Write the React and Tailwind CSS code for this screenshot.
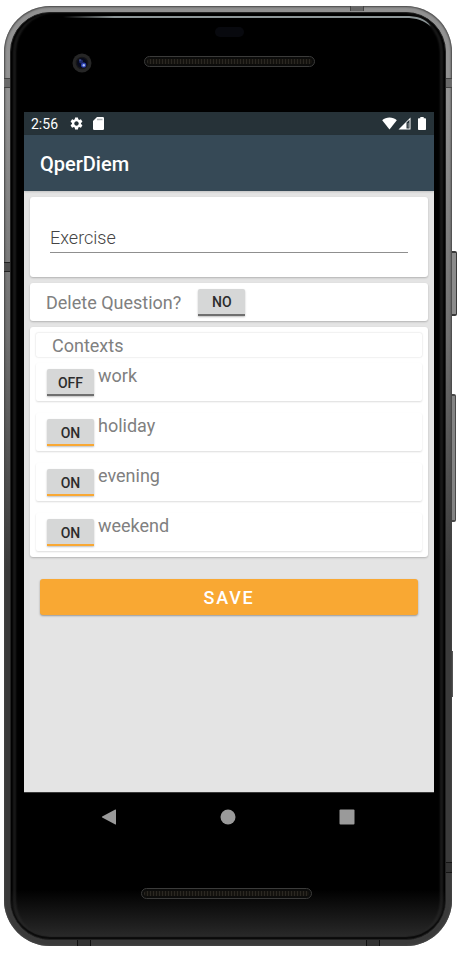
import { useState } from "react";
import { MdSettings } from "react-icons/md";

function SpeakerGrill() {
  return (
    <div className="h-[11px] w-[171px] rounded-full border border-[#3b3b3a] bg-[#0c0c0b] p-[2px]">
      <div className="h-full rounded-full bg-[repeating-linear-gradient(90deg,#2b2822_0px,#2b2822_1px,#15130f_1px,#15130f_3px)]" />
    </div>
  );
}

function Camera() {
  return (
    <svg width="20" height="20" viewBox="0 0 20 20" aria-hidden="true">
      <circle cx="10" cy="10" r="9.5" fill="#262626" />
      <circle cx="10" cy="10" r="6.3" fill="#161618" />
      <circle cx="10" cy="10" r="5" fill="#070a1c" />
      <circle cx="9" cy="8.5" r="2" fill="#1d2a6b" />
      <circle cx="11.6" cy="12" r="2.6" fill="#2b3fae" />
      <circle cx="11.8" cy="12.2" r="1.2" fill="#a9bdf5" />
      <circle cx="8" cy="7" r="0.7" fill="#6d7fc4" />
    </svg>
  );
}

function TopGlare() {
  return (
    <div className="absolute inset-x-0 top-[2px] flex items-start pr-3 pl-[52px]">
      <div className="mt-px h-[2px] flex-1 bg-linear-to-r from-transparent via-[#8d9698] via-15% to-[#8d9698]" />
      <svg width="28" height="14" viewBox="0 0 28 14" aria-hidden="true">
        <path d="M0 1 C12 1 20 3 26 11.5 C19 5.500 12 3 0 3 Z" fill="#8d9698" />
      </svg>
    </div>
  );
}

function StatusBar() {
  return (
    <div className="flex h-[23px] items-center bg-[#263238] pr-2 pl-[7px] text-white">
      <span className="text-sm leading-none">2:56</span>
      <MdSettings className="ml-[11px] size-[15px]" />
      <svg className="ml-[9px]" width="11" height="13" viewBox="0 0 11 13" aria-hidden="true">
        <path d="M4 0 H9.800 Q11 0 11 1.200 V11.800 Q11 13 9.800 13 H1.200 Q0 13 0 11.800 V4 Z" fill="#fff" />
        <path d="M4 2.500 H9.500" stroke="#8a9194" strokeWidth="1.500" strokeOpacity="0.7" />
      </svg>
      <div className="ml-auto flex items-center">
        <svg width="15" height="13" viewBox="0 0 15 13" aria-hidden="true">
          <path d="M7.500 12.600 L0.200 3.200 C4 -0.400 11 -0.400 14.800 3.200 Z" fill="#fff" />
        </svg>
        <svg className="ml-px" width="13" height="13" viewBox="0 0 13 13" aria-hidden="true">
          <path d="M0.500 12.500 L12.500 0.500 V12.500 Z" fill="#fff" />
          <path d="M8.500 5.500 L11.500 2.800 V11.500 H8.500 Z" fill="#263238" />
          <path d="M9.700 6 H10.700 V10.800 H9.700 Z" fill="#fff" fillOpacity="0.4" />
        </svg>
        <svg className="ml-[7px]" width="8" height="13" viewBox="0 0 8 13" aria-hidden="true">
          <path d="M2.300 0 H5.700 V1.300 H7.200 Q8 1.300 8 2.100 V12.200 Q8 13 7.200 13 H0.800 Q0 13 0 12.200 V2.100 Q0 1.300 0.800 1.300 H2.300 Z" fill="#fff" />
        </svg>
      </div>
    </div>
  );
}

function Card({ className = "", children }) {
  return (
    <section className={"rounded-[3px] bg-white shadow-[0_1px_2px_rgba(0,0,0,0.22)] " + className}>
      {children}
    </section>
  );
}

function ToggleButton({ id, labelledBy, on, onText, offText, onToggle }) {
  return (
    <button
      id={id}
      type="button"
      aria-pressed={on}
      aria-labelledby={labelledBy + " " + id}
      onClick={onToggle}
      className={
        "h-[27px] w-[47px] shrink-0 rounded-t-[2px] border-b-2 bg-[#d6d7d7] pt-[2px] text-sm leading-none font-medium text-[#2c2c2c] shadow-[0_1px_2px_rgba(0,0,0,0.25)] " +
        (on ? "border-[#f9a833]" : "border-[#6f6f6f]")
      }
    >
      {on ? onText : offText}
    </button>
  );
}

function SideButtons() {
  return (
    <>
      <div className="absolute top-[245px] left-full h-[65px] w-[5px] rounded-r-[2px] border-y-2 border-r border-[#3a3a3a] bg-[#8c8c8c]" />
      <div className="absolute top-[388px] left-full h-[128px] w-1 rounded-r-[2px] border-y-2 border-r border-[#4a4a4a] bg-[#858585]" />
      <div className="absolute top-[645px] left-full h-[46px] w-px bg-[#555]" />
      <div className="absolute top-[72px] left-0 h-[10px] w-[7px] border-y border-[#444] bg-[#6a6a6a]" />
      <div className="absolute top-[72px] right-0 h-[10px] w-[7px] border-y border-[#444] bg-[#6a6a6a]" />
      <div className="absolute top-[256px] left-0 h-[10px] w-[7px] border-y border-[#222] bg-[#4c4c4c]" />
      <div className="absolute right-0 bottom-[73px] h-[11px] w-[6px] border-y border-[#151515] bg-[#333]" />
      <div className="absolute top-0 right-[88px] h-[5px] w-[14px] border-x border-[#444] bg-[#666]" />
      <div className="absolute bottom-0 left-[73px] h-[6px] w-[14px] border-x border-[#111] bg-[#333]" />
      <div className="absolute right-[72px] bottom-0 h-[6px] w-[14px] border-x border-[#111] bg-[#333]" />
    </>
  );
}

export default function App() {
  const [question, setQuestion] = useState("Exercise");
  const [remove, setRemove] = useState(false);
  const [contexts, setContexts] = useState([
    { name: "work", on: false },
    { name: "holiday", on: true },
    { name: "evening", on: true },
    { name: "weekend", on: true },
  ]);
  const toggle = (name) =>
    setContexts(contexts.map((c) => (c.name === name ? { ...c, on: !c.on } : c)));

  return (
    <div className="flex min-h-screen bg-white pt-[6px] pr-[7px] pb-[7px] pl-1 font-[Roboto,sans-serif]">
      <div className="relative flex flex-1 flex-col rounded-[46px] bg-linear-to-b from-[#929292] from-10% via-[#707070] via-35% to-[#3a3a3a] to-60% p-[6px] shadow-[inset_0_0_2px_1px_#444]">
        <SideButtons />
        <div className="relative flex flex-1 flex-col rounded-[40px] border border-[#222] bg-black pr-[11px] pl-[13px] shadow-[inset_2px_0_2px_#000,inset_-2px_0_2px_#000,inset_5px_0_2px_#1b1b1b,inset_-5px_0_2px_#1b1b1b]">
          <TopGlare />
          <header className="grid h-[99px] grid-cols-[1fr_171px_1fr] items-start">
            <div className="pt-10 pl-12">
              <Camera />
            </div>
            <div className="flex flex-col items-center pt-[14px]">
              <div className="h-[10px] w-[29px] rounded-full bg-[#08090e]" />
              <div className="mt-[19px]">
                <SpeakerGrill />
              </div>
            </div>
          </header>

          <div className="flex flex-1 flex-col bg-[#e4e4e4]">
            <StatusBar />
            <div className="flex h-14 items-center bg-[#364956] px-4 pt-[2px] shadow-[0_1px_2px_rgba(0,0,0,0.15)]">
              <h1 className="text-xl leading-6 font-medium text-white">QperDiem</h1>
            </div>
            <main className="flex flex-1 flex-col gap-[6px] p-[6px]">
              <Card className="px-5 py-6">
                <input
                  type="text"
                  aria-label="Question"
                  value={question}
                  onChange={(e) => setQuestion(e.target.value)}
                  className="block h-8 w-full border-b border-[#8f8f8f] bg-transparent pt-px text-lg leading-6 font-light text-[#444] outline-none"
                />
              </Card>
              <Card className="flex h-[38px] items-center px-4">
                <span id="delete-label" className="pt-[2px] text-lg leading-6 text-[#808080]">
                  Delete Question?
                </span>
                <div className="ml-[17px] flex">
                  <ToggleButton
                    id="delete-toggle"
                    labelledBy="delete-label"
                    on={remove}
                    onText="YES"
                    offText="NO"
                    onToggle={() => setRemove(!remove)}
                  />
                </div>
              </Card>
              <Card className="flex flex-col gap-[6px] p-[6px]">
                <h2 className="h-6 rounded-[2px] px-4 text-lg leading-[26px] text-[#808080] shadow-[0_0_2px_rgba(0,0,0,0.2)]">
                  Contexts
                </h2>
                <ul className="flex flex-col gap-3">
                  {contexts.map((c) => (
                    <li
                      key={c.name}
                      className="flex h-[38px] items-start gap-1 rounded-[2px] px-[11px] shadow-[0_1px_2px_rgba(0,0,0,0.14)]"
                    >
                      <div className="flex pt-[6px]">
                        <ToggleButton
                          id={"toggle-" + c.name}
                          labelledBy={"label-" + c.name}
                          on={c.on}
                          onText="ON"
                          offText="OFF"
                          onToggle={() => toggle(c.name)}
                        />
                      </div>
                      <span id={"label-" + c.name} className="text-lg leading-[26px] text-[#808080]">
                        {c.name}
                      </span>
                    </li>
                  ))}
                </ul>
              </Card>
              <button
                type="button"
                className="mx-[10px] mt-4 h-9 rounded-[3px] bg-[#f9a833] pt-[2px] text-lg leading-6 font-medium tracking-widest text-white shadow-[0_1px_2px_rgba(0,0,0,0.35)]"
              >
                SAVE
              </button>
            </main>
          </div>

          <nav className="flex h-12 items-center justify-between border-t border-[#3a3a3a] pr-[79px] pl-[77px] text-[#9a9a9a]">
            <button type="button" aria-label="Back">
              <svg width="16" height="16" viewBox="0 0 16 16" aria-hidden="true">
                <path d="M14.300 0.500 Q15 0.200 15 1 V15 Q15 15.800 14.300 15.500 L1.200 8.600 Q0.400 8 1.200 7.400 Z" fill="currentColor" />
              </svg>
            </button>
            <button type="button" aria-label="Home">
              <svg width="16" height="16" viewBox="0 0 16 16" aria-hidden="true">
                <circle cx="8" cy="8" r="7.500" fill="currentColor" />
              </svg>
            </button>
            <button type="button" aria-label="Recent apps">
              <svg width="16" height="16" viewBox="0 0 16 16" aria-hidden="true">
                <rect x="0.500" y="0.500" width="15" height="15" rx="1" fill="currentColor" />
              </svg>
            </button>
          </nav>
          <footer className="-mr-[11px] -ml-[13px] flex h-[99px] justify-center rounded-b-[39px] bg-linear-to-b from-transparent from-50% to-[#2b2b2b] pt-12 pr-1 shadow-[inset_0_-2px_1px_#0a0a0a]">
            <SpeakerGrill />
          </footer>
        </div>
      </div>
    </div>
  );
}
